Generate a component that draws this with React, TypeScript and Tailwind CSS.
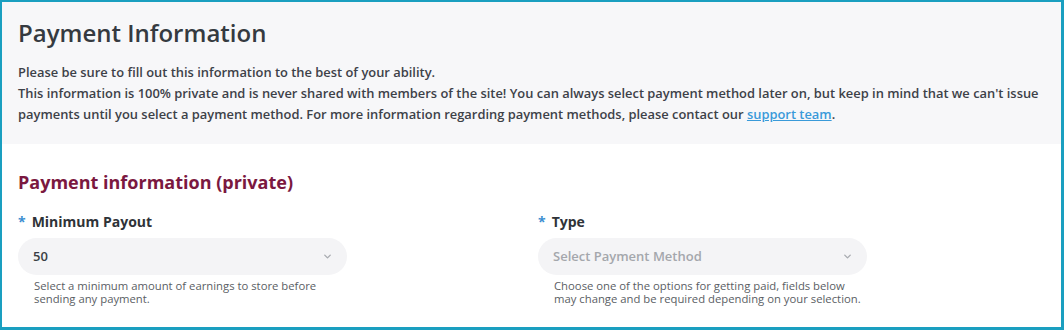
import { ChevronDown } from 'lucide-react'

function Field({ label, value, placeholder, help }: { label: string; value?: string; placeholder?: string; help: string[] }) {
  return (
    <div className="flex flex-col">
      <label className="flex items-center gap-[6px] text-[14px] leading-[20px] font-bold text-[#2f3338]">
        <span className="text-[#3d8fd1]">*</span>
        {label}
      </label>
      <div className="mt-[6px] w-[329px] h-[37px] rounded-full bg-[#f4f4f6] flex items-center justify-between pl-[15px] pr-[14px]">
        {value ? (
          <span className="text-[13px] font-semibold text-[#3a3e44]">{value}</span>
        ) : (
          <span className="text-[13px] font-semibold text-[#a4a7ac]">{placeholder}</span>
        )}
        <ChevronDown className="w-[11px] h-[11px] text-[#a8abb0]" strokeWidth={3} />
      </div>
      <p className="mt-[4px] pl-[16px] text-[11.3px] leading-[13px] font-medium text-[#5a5e64]">
        {help[0]}
        <br />
        {help[1]}
      </p>
    </div>
  )
}

export default function App() {
  return (
    <div
      className="w-[1064px] h-[330px] bg-white border-t-2 border-l-2 border-r-[3px] border-b-[3px] border-[#1a9fc0] flex flex-col"
      style={{ fontFamily: '"Open Sans", "Liberation Sans", sans-serif' }}
    >
      <div className="bg-[#f7f7f9] pl-4 pr-3 pt-[15px] pb-[19px]">
        <h1 className="text-[24px] leading-[32px] font-semibold text-[#353a40]">Payment Information</h1>
        <div className="mt-[13px] text-[12.9px] leading-[21px] font-semibold text-[#3d4148]">
          <p>Please be sure to fill out this information to the best of your ability.</p>
          <p>
            This information is 100% private and is never shared with members of the site! You can always select payment
            method later on, but keep in mind that we can't issue payments until you select a payment method. For more
            information regarding payment methods, please contact our{' '}
            <a href="#" className="text-[#3a9ad9] underline">
              support team
            </a>
            .
          </p>
        </div>
      </div>
      <div className="px-4 pt-[26px]">
        <h2 className="text-[18px] leading-[24px] font-bold text-[#7b1840]">Payment information (private)</h2>
        <div className="mt-[18px] grid grid-cols-2 gap-x-[13px]">
          <Field
            label="Minimum Payout"
            value="50"
            help={['Select a minimum amount of earnings to store before', 'sending any payment.']}
          />
          <Field
            label="Type"
            placeholder="Select Payment Method"
            help={[
              'Choose one of the options for getting paid, fields below',
              'may change and be required depending on your selection.',
            ]}
          />
        </div>
      </div>
    </div>
  )
}
